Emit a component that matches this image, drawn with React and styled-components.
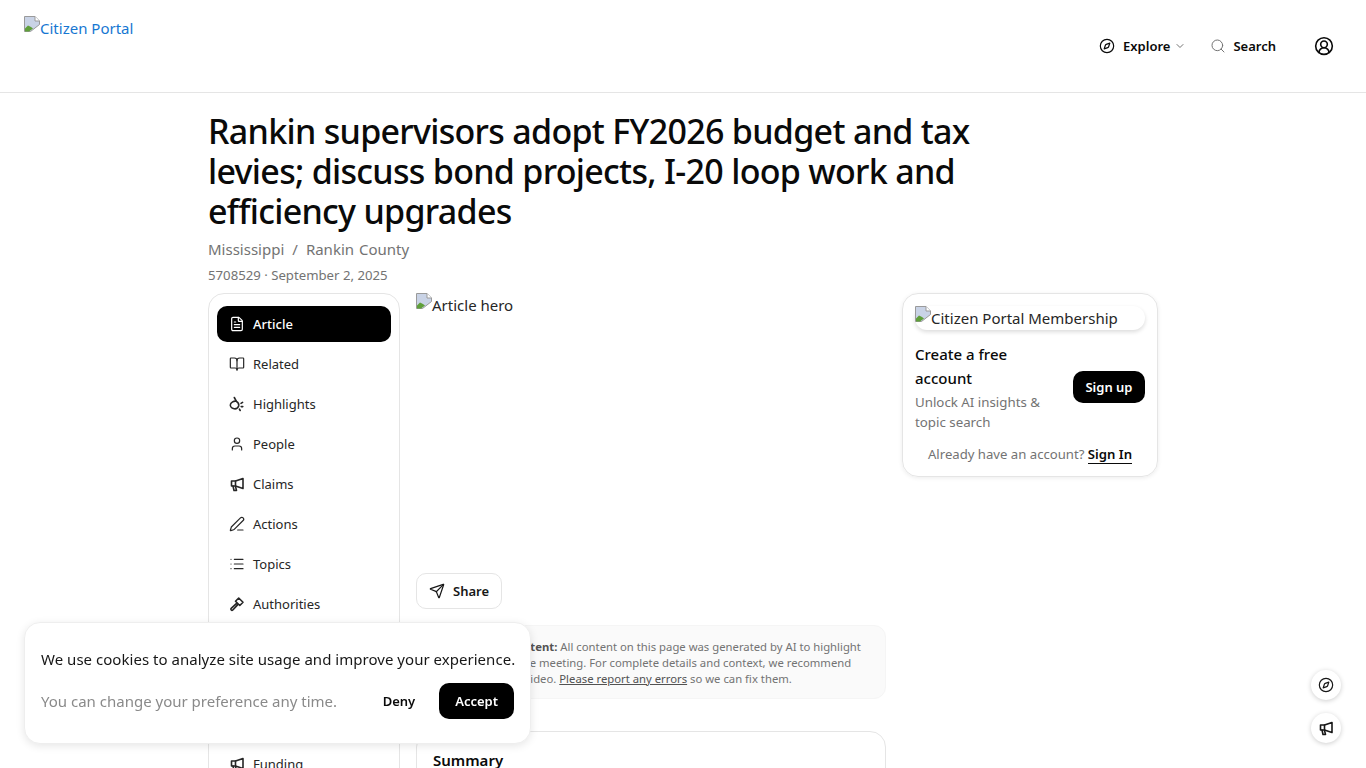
import React from 'react';
import styled, { createGlobalStyle } from 'styled-components';
import {
  Compass, ChevronDown, Search, CircleUserRound, FileText, BookOpen, User,
  PenLine, List, Send,
} from 'lucide-react';

const FONT = '"Noto Sans", "Open Sans", "Liberation Sans", sans-serif';

const Global = createGlobalStyle`
  * { box-sizing: border-box; }
  html, body { margin: 0; padding: 0; background: #fff; }
  body { font-family: ${FONT}; color: #0a0a0a; }
`;

const Page = styled.div`
  height: 768px;
  overflow: hidden;
`;

const Header = styled.header`
  height: 93px;
  border-bottom: 1px solid #e5e5e5;
  display: flex;
  justify-content: space-between;
  padding: 16px 24px 0;
`;

const LogoLink = styled.a`
  display: flex;
  align-items: flex-start;
  color: #1677d2;
  font-size: 15px;
  line-height: 24px;
`;

const NavBar = styled.nav`
  display: flex;
  align-items: center;
  height: 60px;
  padding-right: 8px;
`;

const NavItem = styled.span`
  display: flex;
  align-items: center;
  gap: ${props => props.$gap || 8}px;
  font-size: 13px;
  font-weight: 600;
  margin-right: ${props => props.$mr}px;
`;

const Main = styled.main`
  width: 950px;
  margin-left: 208px;
  padding-top: 18px;
`;

const Title = styled.h1`
  margin: 0;
  width: 790px;
  font-size: 34px;
  line-height: 40px;
  font-weight: 500;
  letter-spacing: -0.7px;
`;

const Crumbs = styled.div`
  margin-top: 6px;
  display: flex;
  gap: 8px;
  font-size: 15px;
  line-height: 24px;
  color: #737373;
  word-spacing: 1px;
`;

const Meta = styled.div`
  margin-top: 4px;
  font-size: 13.2px;
  line-height: 20px;
  color: #737373;
`;

const Columns = styled.div`
  display: grid;
  grid-template-columns: 192px 470px 256px;
  gap: 16px;
  margin-top: 8px;
  align-items: start;
`;

const SideNav = styled.aside`
  border: 1px solid #e5e5e5;
  border-radius: 16px;
  padding: 12px 8px;
  display: flex;
  flex-direction: column;
  gap: 4px;
`;

const SideItem = styled.a`
  height: 36px;
  border-radius: 10px;
  padding: 0 12px;
  display: flex;
  align-items: center;
  gap: 8px;
  font-size: 13px;
  background: ${props => (props.$active ? '#000' : 'transparent')};
  color: ${props => (props.$active ? '#fff' : '#262626')};
  font-weight: ${props => (props.$active ? 500 : 400)};
`;

const SideGap = styled.div`
  height: 116px;
`;

const Content = styled.div`
  display: flex;
  flex-direction: column;
  align-items: flex-start;
`;

const Hero = styled.div`
  height: 280px;
  display: flex;
  align-items: flex-start;
  font-size: 15px;
  line-height: 24px;
  color: #262626;
`;

const ShareButton = styled.button`
  height: 36px;
  padding: 0 12px;
  border: 1px solid #e5e5e5;
  border-radius: 10px;
  background: #fff;
  display: flex;
  align-items: center;
  gap: 8px;
  font-family: ${FONT};
  font-size: 13px;
  font-weight: 600;
  color: #171717;
`;

const Notice = styled.div`
  margin-top: 16px;
  width: 100%;
  height: 74px;
  background: #fafafa;
  border: 1px solid #f5f5f5;
  border-radius: 12px;
  padding: 13px 16px 0;
  font-size: 11.3px;
  line-height: 16px;
  color: #737373;
  b { font-weight: 700; color: #525252; }
  u { color: #525252; }
`;

const SummaryCard = styled.section`
  margin-top: 32px;
  width: 100%;
  height: 300px;
  border: 1px solid #e5e5e5;
  border-radius: 16px;
  padding: 16px;
`;

const SummaryTitle = styled.h2`
  margin: 0;
  font-size: 15px;
  line-height: 24px;
  font-weight: 600;
`;

const SignupCard = styled.aside`
  border: 1px solid #e5e5e5;
  border-radius: 16px;
  padding: 12px 12px 10px;
  box-shadow: 0 1px 4px rgba(0, 0, 0, 0.08);
`;

const Banner = styled.div`
  height: 24px;
  display: flex;
  border-radius: 12px;
  font-size: 15px;
  line-height: 24px;
  color: #262626;
  box-shadow: 0 2px 4px rgba(0, 0, 0, 0.14);
`;

const SignupRow = styled.div`
  display: flex;
  align-items: center;
  justify-content: space-between;
  margin-top: 12px;
`;

const SignupText = styled.div`
  width: 140px;
`;

const SignupHead = styled.div`
  font-size: 15px;
  line-height: 24px;
  font-weight: 500;
`;

const SignupSub = styled.div`
  margin-top: 2px;
  font-size: 13.3px;
  line-height: 20px;
  color: #737373;
`;

const BlackButton = styled.button`
  height: ${props => props.$h}px;
  padding: 0 ${props => props.$px}px;
  border: 0;
  border-radius: 10px;
  background: #000;
  color: #fff;
  font-family: ${FONT};
  font-size: 13px;
  font-weight: 600;
`;

const SignIn = styled.div`
  margin-top: 10px;
  text-align: center;
  font-size: 13.15px;
  line-height: 24px;
  color: #737373;
  a { color: #0a0a0a; font-weight: 600; border-bottom: 1px solid #0a0a0a; }
`;

const Cookie = styled.div`
  position: fixed;
  left: 24px;
  top: 622px;
  width: 507px;
  height: 122px;
  background: #fff;
  border: 1px solid #eee;
  border-radius: 16px;
  padding: 24px 16px 0;
  box-shadow: 0 2px 8px rgba(0, 0, 0, 0.1);
`;

const CookieText = styled.div`
  font-size: 15px;
  line-height: 24px;
  letter-spacing: 0.03px;
  white-space: nowrap;
  color: #171717;
`;

const CookieRow = styled.div`
  margin-top: 12px;
  display: flex;
  align-items: center;
  justify-content: space-between;
`;

const CookieNote = styled.span`
  font-size: 15px;
  color: #8a8a8a;
`;

const CookieActions = styled.div`
  display: flex;
  align-items: center;
  gap: 24px;
`;

const Deny = styled.span`
  font-size: 13px;
  font-weight: 600;
`;

const FloatButton = styled.button`
  position: fixed;
  right: 25px;
  top: ${props => props.$top}px;
  width: 30px;
  height: 30px;
  border-radius: 50%;
  border: 0;
  background: #fff;
  padding: 0;
  display: flex;
  align-items: center;
  justify-content: center;
  color: #171717;
  box-shadow: 0 1px 5px rgba(0, 0, 0, 0.2);
`;

const IconSvg = styled.svg`
  flex: none;
  fill: none;
  stroke: currentColor;
  stroke-width: 1.6;
  stroke-linecap: round;
  stroke-linejoin: round;
`;

const BrokenImage = () => (
  <svg width="16" height="16" viewBox="0 0 16 16" style={{ flex: 'none' }}>
    <path d="M.5.5h10.5l4.5 4.5v3.5l-9 7H.5z" fill="#c9d3e6" stroke="#9a9a9a" />
    <path d="M11 .5v4.5h4.5" fill="#fff" stroke="#9a9a9a" />
    <path d="M1 15.5v-3l3-3 3 1.5 2 1.5-4 3z" fill="#5f9f3a" />
  </svg>
);

const Horn = () => (
  <IconSvg width="16" height="16" viewBox="0 0 16 16">
    <path d="M14 2.5 6.5 5h-4v5h4l7.5 2.5z" />
    <path d="M6.5 5v5" />
    <path d="M4 10l1 4.5h2.5L6.5 10.4" />
  </IconSvg>
);

const Bulb = () => (
  <IconSvg width="16" height="16" viewBox="0 0 16 16">
    <path d="M5.3 1.5 7.4 5.4" />
    <path d="M7.4 5.4c1.7 1 2.6 3 2.3 4.6-1 2.4-3.4 3.2-5.4 2.6C2.3 12 1 10 1.4 8.4c.3-1.6 3.7-4.2 6-3z" />
    <path d="M12 7.4l1.6-1" />
    <path d="M12.2 10.6h1.6" />
    <path d="M10.4 13.2l.8 1.3" />
  </IconSvg>
);

const Hammer = () => (
  <IconSvg width="16" height="16" viewBox="0 0 16 16">
    <path d="M6.5 5.2 9.7 2l4.3 4.3-3.2 3.2z" />
    <path d="M7.6 7.3 2.2 12.4a1.1 1.1 0 0 0 1.6 1.6l5-5.4" />
  </IconSvg>
);

const items = [
  ['Article', <FileText size={16} strokeWidth={1.8} />],
  ['Related', <BookOpen size={16} strokeWidth={1.8} />],
  ['Highlights', <Bulb />],
  ['People', <User size={16} strokeWidth={1.8} />],
  ['Claims', <Horn />],
  ['Actions', <PenLine size={16} strokeWidth={1.8} />],
  ['Topics', <List size={16} strokeWidth={1.8} />],
  ['Authorities', <Hammer />],
];

export default function App() {
  return (
    <Page>
      <Global />
      <Header>
        <LogoLink><BrokenImage />Citizen Portal</LogoLink>
        <NavBar>
          <NavItem $mr={24}>
            <Compass size={16} strokeWidth={1.8} />
            Explore
            <ChevronDown size={12} color="#737373" style={{ marginLeft: -4 }} />
          </NavItem>
          <NavItem $mr={38} $gap={7}>
            <Search size={16} strokeWidth={1.5} color="#737373" />
            Search
          </NavItem>
          <CircleUserRound size={20} strokeWidth={1.9} />
        </NavBar>
      </Header>
      <Main>
        <Title>Rankin supervisors adopt FY2026 budget and tax levies; discuss bond projects, I-20 loop work and efficiency upgrades</Title>
        <Crumbs>
          <span>Mississippi</span>
          <span>/</span>
          <span>Rankin County</span>
        </Crumbs>
        <Meta>5708529 · September 2, 2025</Meta>
        <Columns>
          <SideNav>
            {items.map(([label, icon], i) => (
              <SideItem key={label} $active={i === 0}>{icon}{label}</SideItem>
            ))}
            <SideGap />
            <SideItem><Horn />Funding</SideItem>
          </SideNav>
          <Content>
            <Hero><BrokenImage />Article hero</Hero>
            <ShareButton><Send size={16} strokeWidth={1.8} />Share</ShareButton>
            <Notice>
              <b>AI-generated content:</b> All content on this page was generated by AI to highlight<br />
              key points from the meeting. For complete details and context, we recommend<br />
              watching the full video. <u>Please report any errors</u> so we can fix them.
            </Notice>
            <SummaryCard><SummaryTitle>Summary</SummaryTitle></SummaryCard>
          </Content>
          <SignupCard>
            <Banner><BrokenImage />Citizen Portal Membership</Banner>
            <SignupRow>
              <SignupText>
                <SignupHead>Create a free account</SignupHead>
                <SignupSub>Unlock AI insights &amp; topic search</SignupSub>
              </SignupText>
              <BlackButton $h={32} $px={12.5}>Sign up</BlackButton>
            </SignupRow>
            <SignIn>Already have an account? <a>Sign In</a></SignIn>
          </SignupCard>
        </Columns>
      </Main>
      <Cookie>
        <CookieText>We use cookies to analyze site usage and improve your experience.</CookieText>
        <CookieRow>
          <CookieNote>You can change your preference any time.</CookieNote>
          <CookieActions>
            <Deny>Deny</Deny>
            <BlackButton $h={36} $px={16}>Accept</BlackButton>
          </CookieActions>
        </CookieRow>
      </Cookie>
      <FloatButton $top={670}><Compass size={16} strokeWidth={1.8} /></FloatButton>
      <FloatButton $top={713}><Horn /></FloatButton>
    </Page>
  );
}
